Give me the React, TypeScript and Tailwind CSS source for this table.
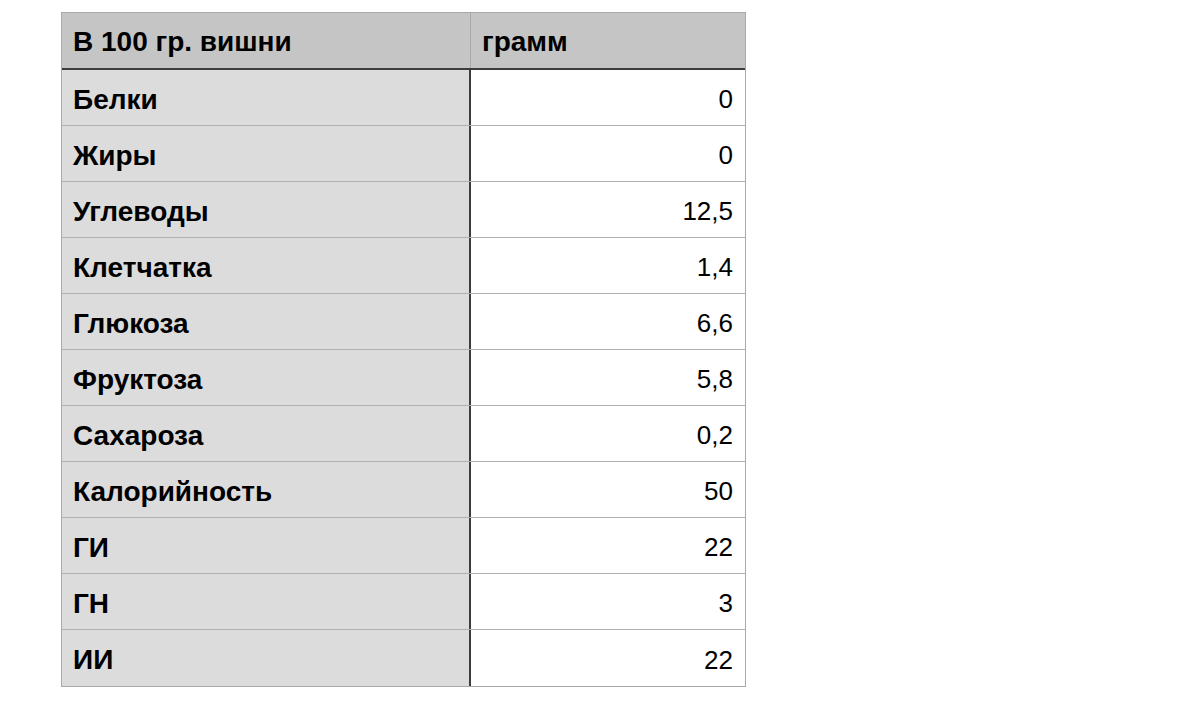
const rows: [string, string][] = [
  ["Белки", "0"],
  ["Жиры", "0"],
  ["Углеводы", "12,5"],
  ["Клетчатка", "1,4"],
  ["Глюкоза", "6,6"],
  ["Фруктоза", "5,8"],
  ["Сахароза", "0,2"],
  ["Калорийность", "50"],
  ["ГИ", "22"],
  ["ГН", "3"],
  ["ИИ", "22"],
]

export default function App() {
  return (
    <div className="min-h-[712px] w-[1200px] bg-white pl-[61px] pt-[12px] font-['Liberation_Sans',Arial,sans-serif] text-black">
      <div className="w-[685px] border border-[#a9a9a9]">
        {/* header */}
        <div className="flex h-[57px] border-b-2 border-[#3c3c3c] bg-[#c5c5c5] text-[28px] font-bold">
          <div className="flex w-[409px] items-center whitespace-nowrap border-r border-[#a9a9a9] px-[11px] pt-[3px]">
            В 100 гр. вишни
          </div>
          <div className="flex flex-1 items-center px-[11px] pt-[3px]">грамм</div>
        </div>
        {rows.map(([name, value], i) => (
          <div
            key={name}
            className={`flex h-[56px] ${i < rows.length - 1 ? "border-b border-[#b0b0b0]" : ""}`}
          >
            <div className="flex w-[409px] items-center border-r-2 border-[#3c3c3c] bg-[#dcdcdc] px-[11px] pt-[4px] text-[28px] font-bold">
              {name}
            </div>
            <div className="flex flex-1 items-center justify-end bg-white px-[12px] pt-[4px] text-[26px]">
              {value}
            </div>
          </div>
        ))}
      </div>
    </div>
  )
}
